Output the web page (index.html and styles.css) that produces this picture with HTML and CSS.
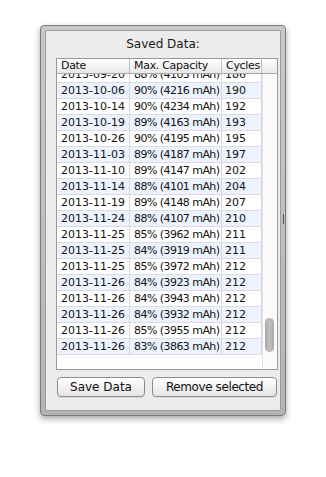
FILE: index.html
```html
<!DOCTYPE html>
<html>
<head>
<meta charset="utf-8">
<link rel="stylesheet" href="styles.css">
</head>
<body>
<div class="window">
  <div class="grip"></div>
  <div class="panel">
    <div class="title">Saved Data:</div>
    <div class="table">
      <div class="thead">
        <div class="th c-date">Date</div>
        <div class="th c-cap">Max. Capacity</div>
        <div class="th c-cyc">Cycles</div>
        <div class="th c-end"></div>
      </div>
      <div class="tbody">
        <div class="rows">
          <div class="row first"><div class="td c-date">2013-09-20</div><div class="td c-cap">88% (4103 mAh)</div><div class="td c-cyc">186</div></div>
          <div class="row alt"><div class="td c-date">2013-10-06</div><div class="td c-cap">90% (4216 mAh)</div><div class="td c-cyc">190</div></div>
          <div class="row"><div class="td c-date">2013-10-14</div><div class="td c-cap">90% (4234 mAh)</div><div class="td c-cyc">192</div></div>
          <div class="row alt"><div class="td c-date">2013-10-19</div><div class="td c-cap">89% (4163 mAh)</div><div class="td c-cyc">193</div></div>
          <div class="row"><div class="td c-date">2013-10-26</div><div class="td c-cap">90% (4195 mAh)</div><div class="td c-cyc">195</div></div>
          <div class="row alt"><div class="td c-date">2013-11-03</div><div class="td c-cap">89% (4187 mAh)</div><div class="td c-cyc">197</div></div>
          <div class="row"><div class="td c-date">2013-11-10</div><div class="td c-cap">89% (4147 mAh)</div><div class="td c-cyc">202</div></div>
          <div class="row alt"><div class="td c-date">2013-11-14</div><div class="td c-cap">88% (4101 mAh)</div><div class="td c-cyc">204</div></div>
          <div class="row"><div class="td c-date">2013-11-19</div><div class="td c-cap">89% (4148 mAh)</div><div class="td c-cyc">207</div></div>
          <div class="row alt"><div class="td c-date">2013-11-24</div><div class="td c-cap">88% (4107 mAh)</div><div class="td c-cyc">210</div></div>
          <div class="row"><div class="td c-date">2013-11-25</div><div class="td c-cap">85% (3962 mAh)</div><div class="td c-cyc">211</div></div>
          <div class="row alt"><div class="td c-date">2013-11-25</div><div class="td c-cap">84% (3919 mAh)</div><div class="td c-cyc">211</div></div>
          <div class="row"><div class="td c-date">2013-11-25</div><div class="td c-cap">85% (3972 mAh)</div><div class="td c-cyc">212</div></div>
          <div class="row alt"><div class="td c-date">2013-11-26</div><div class="td c-cap">84% (3923 mAh)</div><div class="td c-cyc">212</div></div>
          <div class="row"><div class="td c-date">2013-11-26</div><div class="td c-cap">84% (3943 mAh)</div><div class="td c-cyc">212</div></div>
          <div class="row alt"><div class="td c-date">2013-11-26</div><div class="td c-cap">84% (3932 mAh)</div><div class="td c-cyc">212</div></div>
          <div class="row"><div class="td c-date">2013-11-26</div><div class="td c-cap">85% (3955 mAh)</div><div class="td c-cyc">212</div></div>
          <div class="row alt"><div class="td c-date">2013-11-26</div><div class="td c-cap">83% (3863 mAh)</div><div class="td c-cyc">212</div></div>
        </div>
        <div class="scrollbar"><div class="thumb"></div></div>
      </div>
    </div>
    <div class="buttons">
      <div class="btn btn-save">Save Data</div>
      <div class="btn btn-remove">Remove selected</div>
    </div>
  </div>
</div>
</body>
</html>
```
FILE: styles.css
```css
html, body {
  margin: 0;
  padding: 0;
  background: #ffffff;
}
body {
  width: 326px;
  height: 477px;
  overflow: hidden;
  font-family: "DejaVu Sans", "Liberation Sans", sans-serif;
  color: #111;
}
.window {
  position: relative;
  box-sizing: border-box;
  margin: 25px 0 0 40px;
  width: 246px;
  height: 391px;
  border: 1px solid #7a7a7a;
  border-radius: 4px;
  padding: 4px;
  background: linear-gradient(#c9c9c9, #b4b4b4);
  box-shadow: 0 3px 6px rgba(0,0,0,0.35);
}
.grip {
  position: absolute;
  right: 1px;
  top: 188px;
  width: 1px;
  height: 10px;
  background: #555;
}
.panel {
  box-sizing: border-box;
  height: 100%;
  border: 1px solid #9c9c9c;
  border-radius: 2px;
  background: #ececec;
  display: flex;
  flex-direction: column;
}
.title {
  margin-top: 6px;
  height: 15px;
  line-height: 15px;
  font-size: 12px;
  text-align: center;
  color: #1a1a1a;
}
.table {
  margin: 6px 0 0 10px;
  width: 222px;
  height: 312px;
  box-sizing: border-box;
  border: 1px solid #9a9a9a;
  background: #fff;
  display: flex;
  flex-direction: column;
}
.thead {
  display: flex;
  height: 14px;
  border-bottom: 1px solid #a8a8a8;
  background: linear-gradient(#ffffff, #f2f2f2 60%, #e8e8e8);
}
.th {
  box-sizing: border-box;
  height: 14px;
  line-height: 14px;
  font-size: 11px;
  letter-spacing: -0.3px;
  padding-left: 4px;
  border-right: 1px solid #c2c2c2;
  white-space: nowrap;
  overflow: hidden;
}
.c-date { width: 73px; }
.c-cap { width: 92px; }
.c-cyc { width: 40px; }
.c-end { width: 15px; border-right: none; }
.tbody {
  flex: 1;
  display: flex;
  overflow: hidden;
}
.rows {
  width: 205px;
  overflow: hidden;
}
.row {
  display: flex;
  height: 15px;
  border-bottom: 1px solid #dcdcdc;
  background: #fff;
}
.row.alt { background: #edf3fe; }
.row.first { margin-top: -7px; }
.td {
  box-sizing: border-box;
  height: 15px;
  line-height: 15px;
  font-size: 11px;
  padding-left: 4px;
  border-right: 1px solid #d6d6d6;
  white-space: nowrap;
  overflow: hidden;
}
.td.c-cap { letter-spacing: -0.55px; }
.td.c-cyc { padding-left: 3px; }
.scrollbar {
  box-sizing: border-box;
  width: 15px;
  border-left: 1px solid #e2e2e2;
  background: #fbfbfb;
  padding: 244px 0 0 2px;
}
.thumb {
  width: 9px;
  height: 34px;
  border-radius: 5px;
  background: linear-gradient(90deg, #a9a9a9, #c0c0c0 50%, #a9a9a9);
}
.buttons {
  display: flex;
  gap: 7px;
  margin: 7px 0 0 11px;
}
.btn {
  box-sizing: border-box;
  height: 20px;
  line-height: 18px;
  font-size: 12px;
  text-align: center;
  border: 1px solid #8c8c8c;
  border-radius: 4px;
  background: linear-gradient(#ffffff, #f3f3f3 50%, #e4e4e4);
  box-shadow: 0 1px 0 rgba(0,0,0,0.08);
  color: #111;
}
.btn-save { width: 88px; }
.btn-remove { width: 125px; letter-spacing: -0.4px; }
```
